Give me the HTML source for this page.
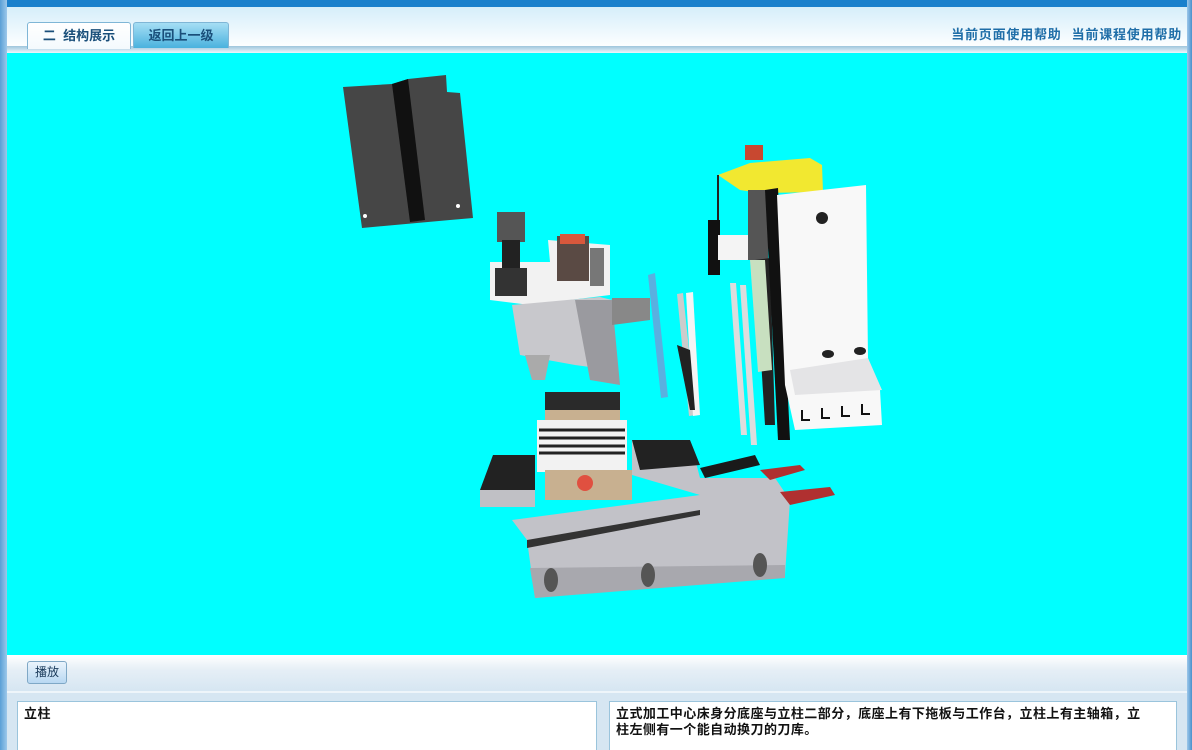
<!DOCTYPE html>
<html><head><meta charset="utf-8"><style>
*{margin:0;padding:0;box-sizing:border-box}
html,body{width:1192px;height:750px;overflow:hidden}
body{background:#d6e6f2;font-family:"Liberation Sans","Noto Sans CJK SC",sans-serif;position:relative}
.topbar{position:absolute;left:0;top:0;width:1192px;height:7px;background:#1a80cc}
.lb{position:absolute;left:0;top:0;width:7px;height:750px;background:linear-gradient(90deg,#5a9fd6,#9cc8ea)}
.rb{position:absolute;right:0;top:0;width:5px;height:750px;background:linear-gradient(90deg,#9cc8ea,#4a90cc)}
.hdr{position:absolute;left:7px;top:7px;width:1180px;height:41px;background:linear-gradient(#d5eefa,#fff)}
.hdrline{position:absolute;left:7px;top:46px;width:1180px;height:7px;background:linear-gradient(#9ec6dc,#eef6fb)}
.tab{position:absolute;top:22px;height:26px;border:1px solid #7fb6d6;border-bottom:none;border-radius:3px 3px 0 0;font-size:13px;font-weight:bold;color:#1a4f7a;line-height:25px;text-align:center}
.t1{left:27px;width:104px;background:linear-gradient(#fff,#f4fafd);height:27px}
.t2{left:133px;width:96px;background:linear-gradient(#a6def4,#4ab2de)}
.help{position:absolute;right:10px;top:24px;font-size:13px;letter-spacing:0.8px;font-weight:bold;color:#1f6ea8}
.help span{margin-left:10px}
.stage{position:absolute;left:7px;top:53px;width:1180px;height:602px;background:#00ffff}
.bar{position:absolute;left:7px;top:655px;width:1180px;height:36px;background:linear-gradient(#fff,#e6eff6 40%,#d6e6f2)}
.btn{position:absolute;left:27px;top:661px;width:40px;height:23px;border:1px solid #7fa8c6;border-radius:3px;background:linear-gradient(#eaf4fc,#b8d8f2);font-size:12px;line-height:21px;text-align:center;color:#1a3a5a}
.sep{position:absolute;left:7px;top:691px;width:1180px;height:2px;background:#eef5fa}
.box{position:absolute;top:701px;height:49px;overflow:hidden;background:#fff;border:1px solid #9ac4dc;border-bottom:none;font-size:13px;letter-spacing:0.45px;font-weight:bold;color:#111;padding:4px 6px;line-height:16px}
</style></head><body>
<div class="topbar"></div>
<div class="hdr"></div>
<div class="hdrline"></div>
<div class="tab t1">二&nbsp; 结构展示</div>
<div class="tab t2">返回上一级</div>
<div class="help"><span>当前页面使用帮助</span><span>当前课程使用帮助</span></div>
<div class="stage">
<svg width="1180" height="602" viewBox="7 53 1180 602" xmlns="http://www.w3.org/2000/svg">
<polygon points="343,87 392,84 408,79 446,75 447,92 460,93 473,218 450,220 362,228" fill="#464646"/>
<polygon points="392,84 408,79 425,220 410,222" fill="#111"/>
<circle cx="365" cy="216" r="2" fill="#fff"/><circle cx="458" cy="206" r="2" fill="#fff"/>
<polygon points="490,300 490,262 550,262 548,240 610,245 610,295 530,305" fill="#f2f2f2"/>
<rect x="497" y="212" width="28" height="30" fill="#555"/>
<rect x="502" y="240" width="18" height="30" fill="#222"/>
<rect x="495" y="268" width="32" height="28" fill="#333"/>
<rect x="557" y="236" width="32" height="45" fill="#5a4a44"/>
<rect x="560" y="234" width="25" height="10" fill="#d8583c"/>
<rect x="590" y="248" width="14" height="38" fill="#777"/>
<polygon points="512,305 600,297 612,300 612,370 575,365 520,355" fill="#c8c8cc"/>
<polygon points="575,300 612,300 620,385 590,380" fill="#9a9a9f"/>
<polygon points="612,298 650,298 650,320 612,325" fill="#888"/>
<polygon points="525,355 550,355 545,380 532,380" fill="#aaa"/>
<rect x="545" y="392" width="75" height="28" fill="#2a2a2a"/>
<rect x="545" y="410" width="75" height="12" fill="#c8b090"/>
<rect x="537" y="420" width="90" height="52" fill="#f2f2f2"/>
<g stroke="#222" stroke-width="3"><line x1="539" y1="430" x2="625" y2="430"/><line x1="539" y1="438" x2="625" y2="438"/><line x1="539" y1="446" x2="625" y2="446"/><line x1="539" y1="453" x2="625" y2="453"/></g>
<polygon points="480,490 493,455 535,455 535,505 480,505" fill="#222"/>
<polygon points="480,490 535,490 535,507 480,507" fill="#c0c0c5"/>
<polygon points="632,440 690,440 700,478 775,478 790,500 785,575 535,598 527,540 512,520 700,495 632,475" fill="#c2c2c8"/>
<polygon points="632,440 690,440 700,465 640,470" fill="#222"/>
<polygon points="700,468 755,455 760,465 705,478" fill="#1a1a1a"/>
<polygon points="527,540 700,510 700,515 527,548" fill="#333"/>
<polygon points="530,568 785,565 785,578 535,598" fill="#a8a8ae"/>
<polygon points="545,470 632,470 632,500 545,500" fill="#c8b090"/>
<circle cx="585" cy="483" r="8" fill="#e05040"/>
<polygon points="760,470 800,465 805,470 770,480" fill="#b03030"/>
<polygon points="780,492 830,487 835,495 790,505" fill="#b03030"/>
<ellipse cx="551" cy="580" rx="7" ry="12" fill="#555"/><ellipse cx="648" cy="575" rx="7" ry="12" fill="#555"/><ellipse cx="760" cy="565" rx="7" ry="12" fill="#555"/>
<polygon points="648,275 655,273 668,397 661,398" fill="#5ab0e0"/>
<polygon points="677,294 683,293 696,415 689,416" fill="#ccc"/>
<polygon points="686,293 693,292 700,415 693,416" fill="#f4f4f4"/>
<polygon points="677,345 690,350 695,410 690,410" fill="#222"/>
<polygon points="730,283 736,283 747,435 741,435" fill="#ddd"/>
<polygon points="740,285 746,285 757,445 751,445" fill="#ddd"/>
<polygon points="718,175 750,163 810,158 822,165 823,192 760,193 740,190" fill="#f2e830"/>
<rect x="745" y="145" width="18" height="15" fill="#c84830"/>
<line x1="718" y1="175" x2="718" y2="268" stroke="#222" stroke-width="2"/>
<rect x="708" y="220" width="12" height="55" fill="#111"/>
<rect x="718" y="235" width="35" height="25" fill="#f4f4f4"/>
<rect x="748" y="190" width="20" height="70" fill="#555"/>
<polygon points="755,260 770,258 775,425 765,425" fill="#222"/>
<polygon points="765,190 778,188 790,440 778,440" fill="#111"/>
<polygon points="750,260 765,260 772,370 758,372" fill="#c8e0c0"/>
<polygon points="777,195 866,185 868,360 880,390 882,425 795,430 785,385" fill="#f8f8f8"/>
<polygon points="790,370 868,358 882,390 795,395" fill="#e4e4e6"/>
<circle cx="822" cy="218" r="6" fill="#222"/>
<ellipse cx="828" cy="354" rx="6" ry="4" fill="#222"/><ellipse cx="860" cy="351" rx="6" ry="4" fill="#222"/>
<g stroke="#111" stroke-width="2" fill="none"><polyline points="802,410 802,420 810,420"/><polyline points="822,408 822,418 830,418"/><polyline points="842,406 842,416 850,416"/><polyline points="862,404 862,414 870,414"/></g>
</svg>
</div>
<div class="bar"></div>
<div class="btn">播放</div>
<div class="sep"></div>
<div class="box" style="left:17px;width:580px">立柱</div>
<div class="box" style="left:609px;width:568px">立式加工中心床身分底座与立柱二部分，底座上有下拖板与工作台，立柱上有主轴箱，立<br>柱左侧有一个能自动换刀的刀库。</div>
<div class="lb"></div>
<div class="rb"></div>
</body></html>
